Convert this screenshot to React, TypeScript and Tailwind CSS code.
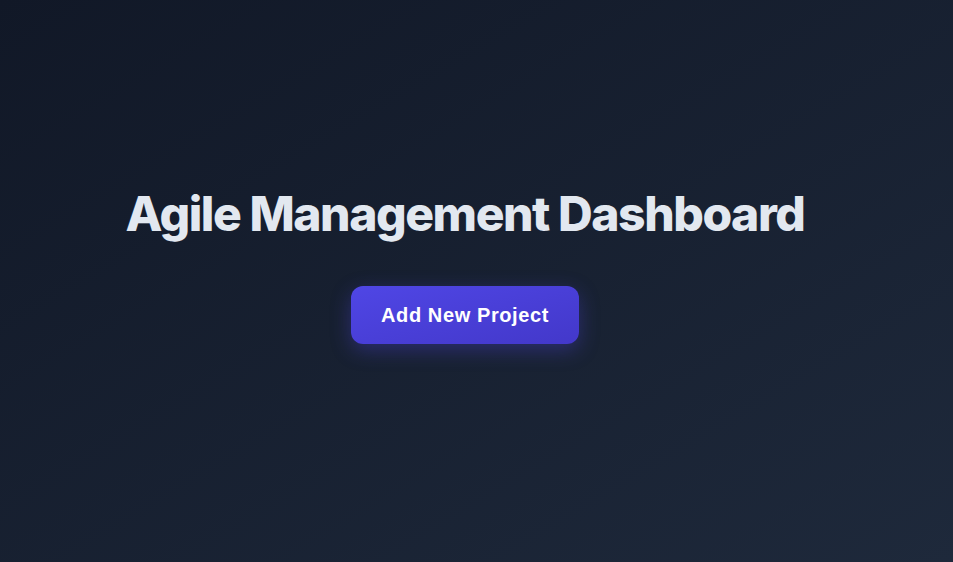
export default function App() {
  return (
    <div className="min-h-screen w-full bg-gradient-to-br from-[#111827] to-[#1e293b] flex flex-col items-center pt-[178px] pr-[23px]">
      <h1 className="font-['Inter',_'Noto_Sans',_sans-serif] text-[48px] leading-[72px] font-extrabold tracking-[-0.03em] text-[#e2e8f0]">
        Agile Management Dashboard
      </h1>
      <button className="mt-[36px] px-[30px] py-[14px] rounded-xl bg-gradient-to-br from-[#4f46e5] to-[#4338ca] font-['Liberation_Sans',_Arial,_sans-serif] text-white text-[20px] leading-[30px] tracking-[0.6px] font-bold shadow-[0_6px_20px_rgba(79,70,229,0.35)]">
        Add New Project
      </button>
    </div>
  );
}
